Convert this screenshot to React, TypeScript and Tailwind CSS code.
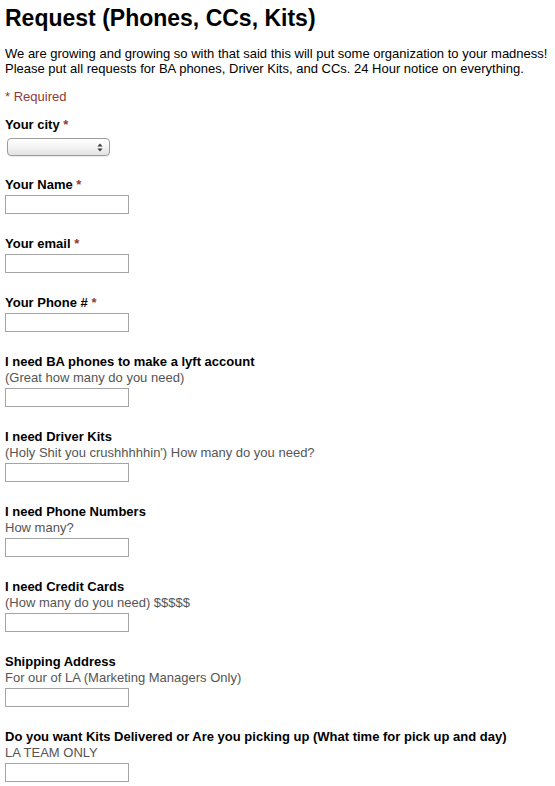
import React from "react";

type FieldProps = { label: string; help?: string; required?: boolean };

const Field = ({ label, help, required }: FieldProps) => (
  <div className="mb-[22px]">
    <div className="text-[13px] leading-[16px] font-bold text-black whitespace-nowrap">
      {label}
      {required && <span className="text-[#8e3a36]"> *</span>}
    </div>
    {help && (
      <div className="text-[13px] leading-[16px] text-[#555555] whitespace-nowrap">{help}</div>
    )}
    <input
      type="text"
      className="mt-[2px] block w-[124px] h-[19px] border border-[#a4a4a4] bg-white outline-none"
    />
  </div>
);

export default function App() {
  return (
    <div className="min-h-screen bg-white pl-[5px] pt-[5px] font-['Liberation_Sans',Arial,sans-serif] text-black">
      <h1 className="text-[23px] leading-[27px] font-bold whitespace-nowrap">
        Request (Phones, CCs, Kits)
      </h1>
      <div className="mt-[14px] text-[13px] leading-[15px]">
        <div className="whitespace-nowrap">
          We are growing and growing so with that said this will put some organization to your madness!
        </div>
        <div className="whitespace-nowrap">
          Please put all requests for BA phones, Driver Kits, and CCs. 24 Hour notice on everything.
        </div>
      </div>
      <div className="mt-[13px] text-[13px] leading-[15px] text-[#8e3a36]">* Required</div>

      <div className="mt-[13px] mb-[21px]">
        <div className="text-[13px] leading-[16px] font-bold whitespace-nowrap">
          Your city<span className="text-[#8e3a36]"> *</span>
        </div>
        <div className="ml-[2px] mt-[5px] w-[103px] h-[18px] rounded-[4px] border border-[#9c9c9c] bg-linear-to-b from-white via-[#f4f4f4] to-[#e2e2e2] flex items-center justify-end pr-[6px] shadow-[0_1px_1px_rgba(0,0,0,0.08)]">
          <svg width="6" height="9" viewBox="0 0 6 9">
            <path d="M3 0.5 L5.6 3.6 H0.4 Z M3 8.5 L0.4 5.4 H5.6 Z" fill="#3a3a3a" />
          </svg>
        </div>
      </div>

      <Field label="Your Name" required />
      <Field label="Your email" required />
      <Field label="Your Phone #" required />
      <Field label="I need BA phones to make a lyft account" help="(Great how many do you need)" />
      <Field label="I need Driver Kits" help="(Holy Shit you crushhhhhin') How many do you need?" />
      <Field label="I need Phone Numbers" help="How many?" />
      <Field label="I need Credit Cards" help="(How many do you need) $$$$$" />
      <Field label="Shipping Address" help="For our of LA (Marketing Managers Only)" />
      <Field
        label="Do you want Kits Delivered or Are you picking up (What time for pick up and day)"
        help="LA TEAM ONLY"
      />
    </div>
  );
}
